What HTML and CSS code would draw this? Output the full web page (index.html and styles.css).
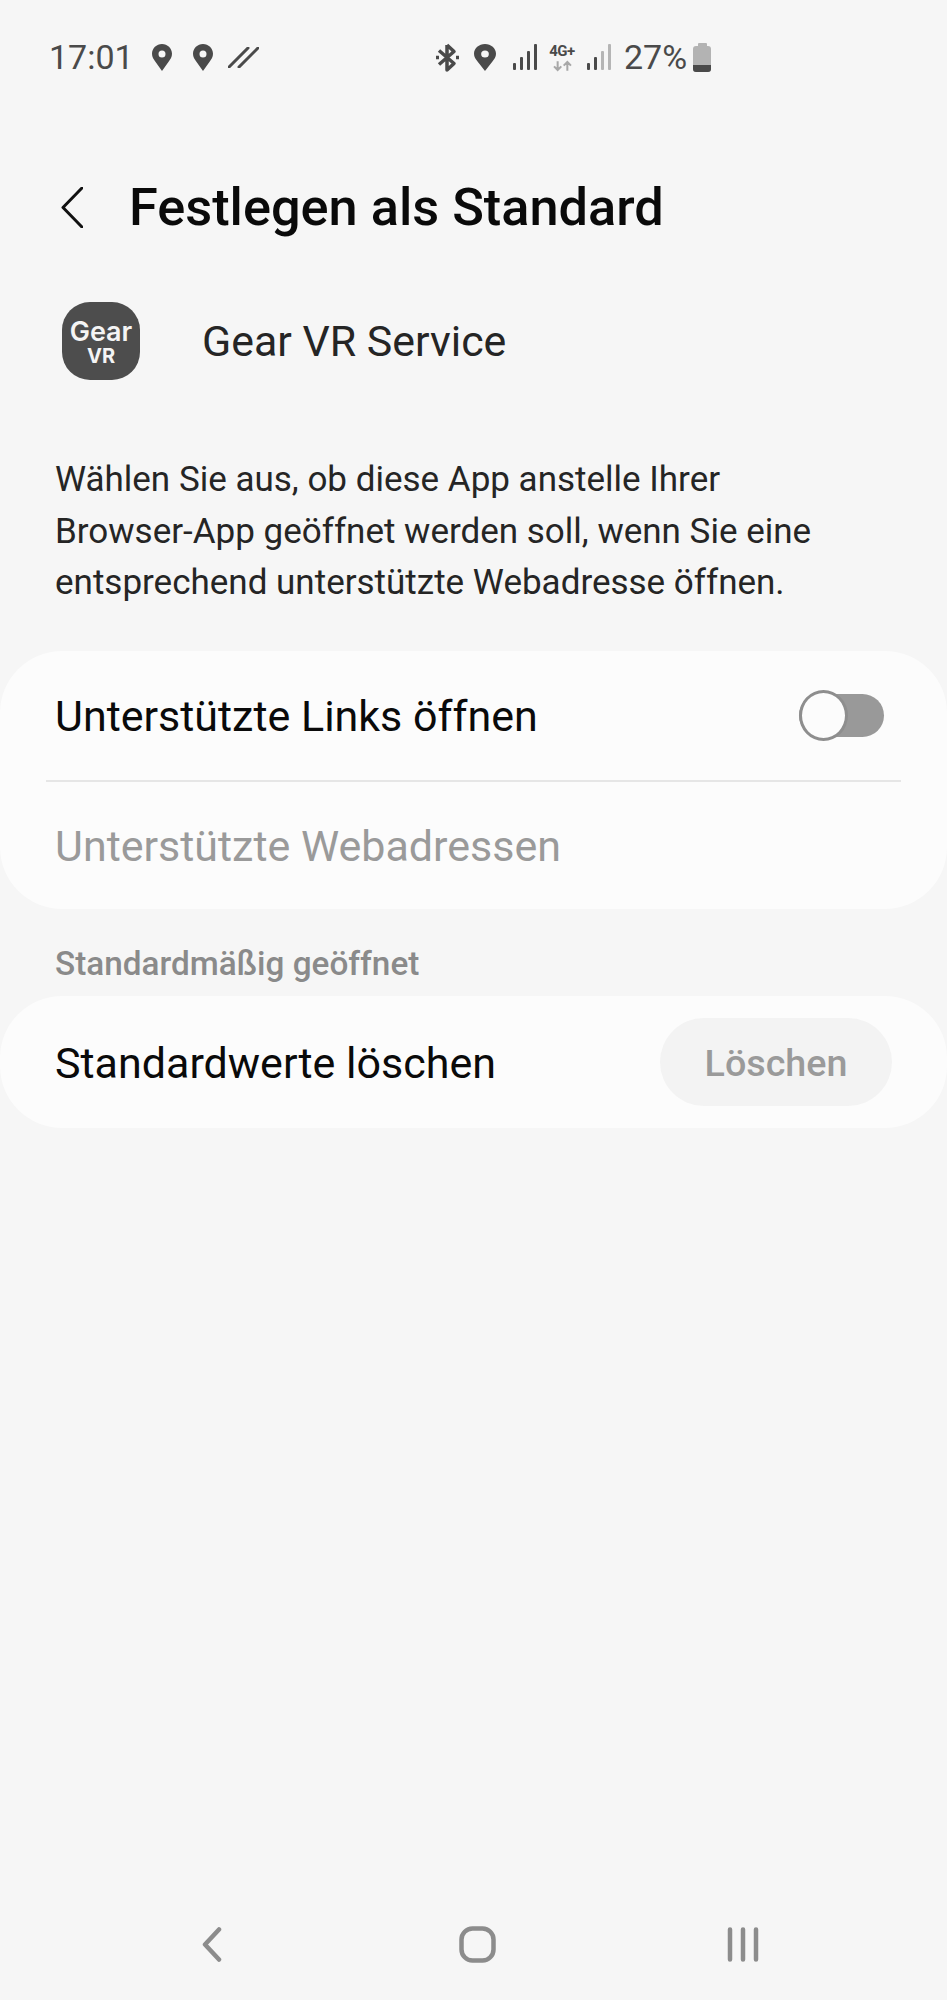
FILE: index.html
```html
<!DOCTYPE html>
<html lang="de">
<head>
  <meta charset="UTF-8">
  <title>Festlegen als Standard</title>
  <meta name="viewport" content="width=device-width, initial-scale=1.0">
  <link rel="stylesheet" href="styles.css">
</head>
<body>
  <div class="status-bar">
    <div class="status-left">
      <span class="time">17:01</span>
      <svg class="pin" viewBox="0 0 20 27"><path fill-rule="evenodd" d="M10 0C4.5 0 0 4.3 0 9.8c0 3.2 1.5 5.5 3.4 7.9L10 27l6.6-9.3c1.9-2.4 3.4-4.7 3.4-7.9C20 4.3 15.5 0 10 0zm0 6.5a3.5 3.5 0 1 1 0 7 3.5 3.5 0 0 1 0-7z"/></svg>
      <svg class="pin" viewBox="0 0 20 27"><path fill-rule="evenodd" d="M10 0C4.5 0 0 4.3 0 9.8c0 3.2 1.5 5.5 3.4 7.9L10 27l6.6-9.3c1.9-2.4 3.4-4.7 3.4-7.9C20 4.3 15.5 0 10 0zm0 6.5a3.5 3.5 0 1 1 0 7 3.5 3.5 0 0 1 0-7z"/></svg>
      <svg class="slashes" viewBox="0 0 31 21"><path d="M1 20L20 1M11 20L30 1"/></svg>
    </div>
    <div class="status-right">
      <svg class="bluetooth" viewBox="0 0 24 29"><path d="M11 2v25l7-6.5-15-13M11 2l7 6.5-15 13"/><path class="bt-dots" d="M0 14.5h3M20 14.5h3"/></svg>
      <svg class="pin pin-big" viewBox="0 0 20 27" preserveAspectRatio="none"><path fill-rule="evenodd" d="M10 0C4.5 0 0 4.3 0 9.8c0 3.2 1.5 5.5 3.4 7.9L10 27l6.6-9.3c1.9-2.4 3.4-4.7 3.4-7.9C20 4.3 15.5 0 10 0zm0 6.5a3.5 3.5 0 1 1 0 7 3.5 3.5 0 0 1 0-7z"/></svg>
      <svg class="signal" viewBox="0 0 24 26"><rect x="0" y="19" width="3" height="7" rx="1"/><rect x="7" y="13" width="3" height="13" rx="1"/><rect x="14" y="7" width="3" height="19" rx="1"/><rect x="21" y="0" width="3" height="26" rx="1"/></svg>
      <div class="network">
        <span class="network-label">4G+</span>
        <svg class="arrows" viewBox="0 0 26 12"><path d="M7 0v11M2.500 6.500l4.500 4.500 4.500-4.500M19 12V1M14.500 5.500l4.500-4.500 4.500 4.500"/></svg>
      </div>
      <svg class="signal" viewBox="0 0 24 26"><rect x="0" y="19" width="3" height="7" rx="1"/><rect x="7" y="13" width="3" height="13" rx="1"/><rect class="off" x="14" y="7" width="3" height="19" rx="1"/><rect class="off" x="21" y="0" width="3" height="26" rx="1"/></svg>
      <span class="battery-text">27%</span>
      <div class="battery"><div class="battery-cap"></div><div class="battery-body"><div class="battery-level"></div></div></div>
    </div>
  </div>

  <div class="header">
    <svg class="back" viewBox="0 0 22 41"><path d="M21 1L2 20.500 21 40"/></svg>
    <h1>Festlegen als Standard</h1>
  </div>

  <div class="app-row">
    <div class="app-icon">
      <span class="app-icon-gear">Gear</span>
      <span class="app-icon-vr">VR</span>
    </div>
    <span class="app-name">Gear VR Service</span>
  </div>

  <p class="description">Wählen Sie aus, ob diese App anstelle Ihrer<br>Browser-App geöffnet werden soll, wenn Sie eine<br>entsprechend unterstützte Webadresse öffnen.</p>

  <div class="card card-links">
    <div class="row row-top">
      <span>Unterstützte Links öffnen</span>
      <div class="toggle"><div class="toggle-knob"></div></div>
    </div>
    <div class="divider"></div>
    <div class="row row-bottom disabled">Unterstützte Webadressen</div>
  </div>

  <div class="section-label">Standardmäßig geöffnet</div>

  <div class="card card-clear">
    <span class="clear-label">Standardwerte löschen</span>
    <button class="clear-btn">Löschen</button>
  </div>

  <div class="nav-bar">
    <svg class="nav-back" viewBox="0 0 20 35"><path d="M17 2.500L3 17.500 17 32.500"/></svg>
    <svg class="nav-home" viewBox="0 0 37 37"><rect x="2.500" y="2.500" width="32" height="32" rx="11"/></svg>
    <svg class="nav-recent" viewBox="0 0 32 35"><path d="M3 2.500v30M16 2.500v30M29 2.500v30"/></svg>
  </div>
</body>
</html>
```

FILE: styles.css
```css
* {
  box-sizing: border-box;
}
body {
  margin: 0;
  min-height: 2000px;
  display: flex;
  flex-direction: column;
  background: #f6f6f6;
  color: #252525;
  font-family: Roboto, sans-serif;
}

/* status bar */
.status-bar {
  display: flex;
  align-items: center;
  height: 30px;
  margin-top: 42px;
  color: #4a4a4a;
}
.status-left {
  display: flex;
  align-items: center;
  width: 436px;
  padding-left: 49px;
}
.status-right {
  display: flex;
  align-items: center;
}
.time {
  font-size: 34px;
  width: 103px;
}
.pin {
  width: 20px;
  height: 27px;
  margin-right: 21px;
  fill: #4a4a4a;
}
.slashes {
  width: 31px;
  height: 21px;
  margin-left: -6px;
  fill: none;
  stroke: #4a4a4a;
  stroke-width: 3;
  stroke-linecap: round;
}
.bluetooth {
  width: 24px;
  height: 29px;
  margin-right: 14px;
  fill: none;
  stroke: #4a4a4a;
  stroke-width: 3.5;
  stroke-linejoin: round;
}
.pin-big {
  width: 22px;
  margin-right: 17px;
}
.signal {
  width: 24px;
  height: 26px;
  fill: #4a4a4a;
}
.signal .off {
  fill: #b5b5b5;
}
.network {
  display: flex;
  flex-direction: column;
  align-items: center;
  width: 26px;
  margin: 2px 12px 0;
}
.network-label {
  font-size: 15px;
  font-weight: 700;
  line-height: 14px;
  letter-spacing: -0.5px;
}
.arrows {
  width: 21px;
  height: 12px;
  margin-top: 2px;
  fill: none;
  stroke: #a8a8a8;
  stroke-width: 2.5;
}
.battery-text {
  font-size: 34px;
  margin: 0 6px 0 13px;
}
.battery {
  display: flex;
  flex-direction: column;
  align-items: center;
  width: 18px;
  height: 29px;
}
.battery-cap {
  width: 9px;
  height: 3px;
  border-radius: 1px 1px 0 0;
  background: #b3b3b3;
}
.battery-body {
  display: flex;
  align-items: flex-end;
  width: 18px;
  height: 26px;
  border-radius: 3px;
  overflow: hidden;
  background: #b3b3b3;
}
.battery-level {
  width: 100%;
  height: 7px;
  background: #4a4a4a;
}

/* header */
.header {
  display: flex;
  align-items: center;
  height: 60px;
  margin-top: 105px;
  padding-left: 61px;
}
.back {
  width: 22px;
  height: 41px;
  fill: none;
  stroke: #111;
  stroke-width: 3;
  stroke-linecap: round;
  stroke-linejoin: round;
}
h1 {
  margin: 0 0 0 46px;
  font-size: 52.3px;
  font-weight: 500;
  color: #0a0a0a;
  white-space: nowrap;
}

/* app row */
.app-row {
  display: flex;
  align-items: center;
  margin-top: 65px;
  padding-left: 62px;
}
.app-icon {
  display: flex;
  flex-direction: column;
  align-items: center;
  justify-content: center;
  width: 78px;
  height: 78px;
  padding-top: 2px;
  border-radius: 28px;
  background: #4d4d4d;
  color: #f4f4f4;
  font-family: Inter, sans-serif;
}
.app-icon-gear {
  font-size: 27px;
  font-weight: 600;
  line-height: 27px;
}
.app-icon-vr {
  font-size: 20px;
  font-weight: 700;
  line-height: 22px;
}
.app-name {
  margin-left: 62px;
  font-size: 42.900px;
}

/* text */
.description {
  margin: 74px 0 0;
  padding-left: 55px;
  font-size: 35px;
  line-height: 51.700px;
}

/* cards */
.card {
  margin-top: 42px;
  background: #fcfcfc;
  border-radius: 62px;
  font-size: 43px;
  color: #0a0a0a;
}
.row {
  display: flex;
  align-items: center;
  justify-content: space-between;
  padding-left: 55px;
}
.row-top {
  height: 129px;
  padding-right: 63px;
}
.row-bottom {
  height: 127px;
}
.disabled {
  color: #9a9a9a;
}
.divider {
  height: 2px;
  margin: 0 46px;
  background: #e6e6e6;
}
.toggle {
  position: relative;
  width: 85px;
  height: 43px;
  border-radius: 22px;
  background: #999;
}
.toggle-knob {
  position: absolute;
  left: 0;
  top: -4px;
  width: 49px;
  height: 51px;
  border: 3px solid #8e8e8e;
  border-radius: 50%;
  background: #fcfcfc;
}
.section-label {
  margin-top: 35px;
  padding-left: 55px;
  font-size: 33.300px;
  font-weight: 500;
  line-height: 40px;
  color: #8a8a8a;
}
.card-clear {
  display: flex;
  align-items: center;
  justify-content: space-between;
  height: 132px;
  margin-top: 12px;
  padding: 0 55px;
}
.clear-label {
  padding-top: 2px;
}
.clear-btn {
  width: 232px;
  height: 88px;
  padding-top: 3px;
  border: none;
  border-radius: 44px;
  background: #f3f3f3;
  color: #9a9a9a;
  font-family: Roboto, sans-serif;
  font-size: 37.700px;
  font-weight: 500;
}

/* navigation */
.nav-bar {
  display: flex;
  align-items: center;
  justify-content: space-between;
  margin-top: auto;
  padding: 0 188px 37px 202px;
}
.nav-bar svg {
  fill: none;
  stroke: #8c8c8c;
  stroke-width: 4.500;
  stroke-linecap: round;
  stroke-linejoin: round;
}
.nav-back {
  width: 20px;
  height: 35px;
}
.nav-home {
  width: 37px;
  height: 37px;
  margin-left: 6px;
}
.nav-recent {
  width: 32px;
  height: 35px;
}
```
